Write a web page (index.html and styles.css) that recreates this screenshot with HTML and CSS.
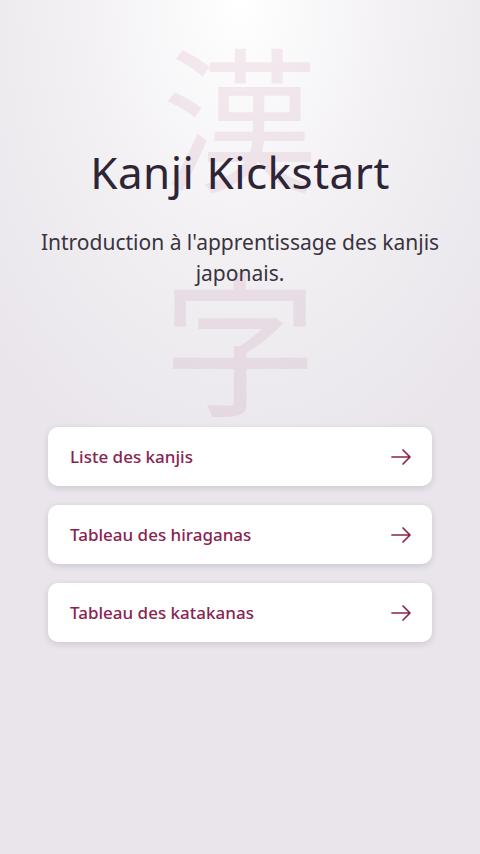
FILE: index.html
```html
<!DOCTYPE html>
<html lang="fr">
<head>
  <meta charset="UTF-8" />
  <meta name="viewport" content="width=device-width, initial-scale=1.0" />
  <title>Kanji Kickstart</title>
  <link rel="stylesheet" href="styles.css">
</head>
<body>

  <main class="page">
    <section class="hero">
      <div class="hero-kanji" aria-hidden="true">
        <span>漢</span>
        <span>字</span>
      </div>
      <h1>Kanji Kickstart</h1>
      <p>Introduction à l'apprentissage des kanjis japonais.</p>
    </section>

    <nav class="menu">
      <a class="menu-item" href="#">
        <span>Liste des kanjis</span>
        <svg viewBox="0 0 24 24" width="24" height="24"><path d="M3 12h18M14 5l7 7-7 7" /></svg>
      </a>
      <a class="menu-item" href="#">
        <span>Tableau des hiraganas</span>
        <svg viewBox="0 0 24 24" width="24" height="24"><path d="M3 12h18M14 5l7 7-7 7" /></svg>
      </a>
      <a class="menu-item" href="#">
        <span>Tableau des katakanas</span>
        <svg viewBox="0 0 24 24" width="24" height="24"><path d="M3 12h18M14 5l7 7-7 7" /></svg>
      </a>
    </nav>
  </main>

</body>
</html>
```

FILE: styles.css
```css
html, body {
  margin: 0;
  height: 100%;
}

body {
  font-family: "Noto Sans", "Open Sans", sans-serif;
  background: radial-gradient(ellipse 70% 60% at 50% 0%, #ffffff 0%, #f3f1f4 45%, #e9e5eb 100%);
  background-color: #e9e5eb;
  color: #2e2638;
}

.page {
  display: flex;
  flex-direction: column;
  align-items: center;
  padding: 0 24px;
}

.hero {
  position: relative;
  width: 100%;
  height: 427px;
  display: flex;
  flex-direction: column;
  align-items: center;
  box-sizing: border-box;
  padding-top: 142px;
  text-align: center;
}

.hero-kanji {
  position: absolute;
  top: 0;
  left: 50%;
  transform: translateX(-50%);
  display: flex;
  flex-direction: column;
  align-items: center;
  font-family: "Noto Sans CJK JP", sans-serif;
  font-weight: 400;
  font-size: 156px;
  line-height: 224px;
  color: rgba(160, 60, 95, 0.09);
  pointer-events: none;
}

.hero h1 {
  position: relative;
  margin: 0;
  font-size: 44px;
  font-weight: 400;
  letter-spacing: 0.5px;
  color: #2d2536;
}

.hero p {
  position: relative;
  margin: 25px 0 0;
  font-size: 21px;
  line-height: 31px;
  color: #3a3340;
}

.menu {
  width: 384px;
  display: flex;
  flex-direction: column;
  gap: 19px;
}

.menu-item {
  display: flex;
  align-items: center;
  justify-content: space-between;
  height: 59px;
  padding: 0 19px 0 22px;
  background: #ffffff;
  border-radius: 10px;
  box-shadow: 0 2px 6px rgba(60, 40, 70, 0.16);
  text-decoration: none;
  color: #8a2351;
  font-size: 17px;
  font-weight: 500;
}

.menu-item svg {
  fill: none;
  stroke: #8a2351;
  stroke-width: 1.7;
  stroke-linecap: round;
  stroke-linejoin: round;
}
```
